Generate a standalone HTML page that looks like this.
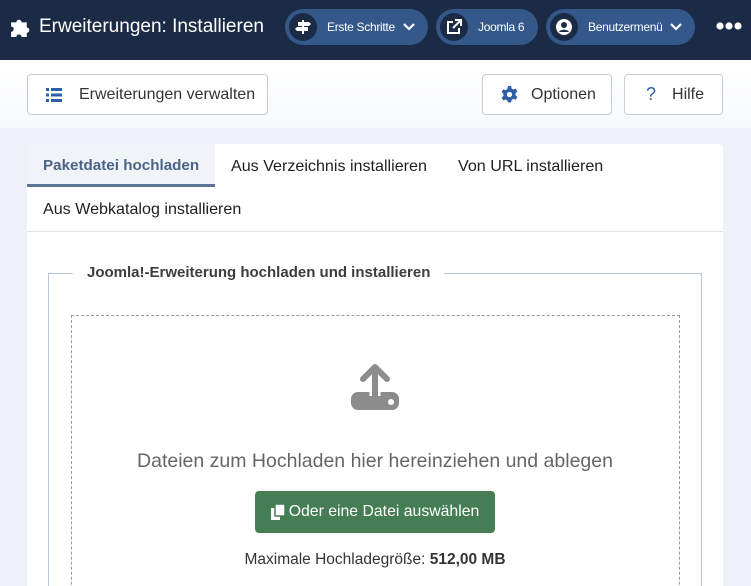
<!DOCTYPE html><html><head><meta charset="utf-8"><style>
*{box-sizing:border-box;margin:0;padding:0}
html,body{width:751px;height:586px;overflow:hidden}
body{background:#eef2f8;font-family:"Liberation Sans",sans-serif;position:relative;color:#22262a}
.a{position:absolute}
.hdr{left:0;top:0;width:751px;height:60px;background:#1c2b45}
.pill{position:absolute;top:9px;height:36px;border-radius:18px;background:#34588a;color:#fff;font-size:12px;display:flex;align-items:center;letter-spacing:-.3px}
.pill .c{width:28px;height:28px;border-radius:50%;background:#1c2b45;margin:0 10px 0 4px;display:flex;align-items:center;justify-content:center}
.tb{left:0;top:60px;width:751px;height:68px;background:linear-gradient(#fff,#f7f9fc)}
.btn{position:absolute;top:74px;height:41px;background:#fff;border:1px solid #c9ced6;border-radius:4px;font-size:16px;color:#333;display:flex;align-items:center}
.card{left:27px;top:144px;width:696px;height:450px;background:#fff;border-radius:4px;overflow:hidden}
.tab{position:absolute;font-size:16.1px;color:#1f1f1f}
</style></head><body>
<div class="a hdr"></div>
<svg class="a" style="left:9px;top:15px" width="23" height="23" viewBox="0 0 22 22"><path fill="#fff" d="M2 7h5a2.5 2.5 0 1 1 5 0h5v5a2.5 2.5 0 1 1 0 5v4H12a2.5 2.5 0 1 0-5 0H2v-5a2.5 2.5 0 1 0 0-5z"/></svg>
<div class="a" style="left:39px;top:16px;font-size:19px;color:#fff">Erweiterungen: Installieren</div>
<div class="pill" style="left:285px;width:143px"><div class="c"><svg width="16" height="16" viewBox="0 0 16 16"><path fill="#fff" d="M7 1h2v2h5l2 2-2 2H9v1h4v4H9v3H7v-3H2l-2-2 2-2h5V7H3V3h4z"/></svg></div>Erste Schritte<svg style="margin-left:8px" width="12" height="8" viewBox="0 0 12 8"><path d="M1 1l5 5 5-5" stroke="#fff" stroke-width="2.2" fill="none"/></svg></div>
<div class="pill" style="left:436px;width:102px"><div class="c"><svg width="16" height="16" viewBox="0 0 16 16" fill="none" stroke="#fff" stroke-width="2"><path d="M7 3H2v11h11V9M9 1h6v6M15 1L7 9"/></svg></div>Joomla 6</div>
<div class="pill" style="left:546px;width:149px"><div class="c"><svg width="18" height="18" viewBox="0 0 18 18"><circle cx="9" cy="9" r="8" fill="#fff"/><circle cx="9" cy="7" r="3" fill="#1c2b45"/><path d="M4 14c1-3 9-3 10 0" fill="#1c2b45"/></svg></div>Benutzermenü<svg style="margin-left:8px" width="12" height="8" viewBox="0 0 12 8"><path d="M1 1l5 5 5-5" stroke="#fff" stroke-width="2.2" fill="none"/></svg></div>
<svg class="a" style="left:716px;top:21px" width="26" height="10"><circle cx="4" cy="5" r="3.6" fill="#fff"/><circle cx="13" cy="5" r="3.6" fill="#fff"/><circle cx="22" cy="5" r="3.6" fill="#fff"/></svg>
<div class="a tb"></div>
<div class="btn" style="left:27px;width:241px"><svg style="margin:0 17px 0 18px" width="16" height="14" viewBox="0 0 16 14" fill="#2d5fa8"><rect x="0" y="0" width="3" height="3"/><rect x="5" y="0" width="11" height="3"/><rect x="0" y="5.5" width="3" height="3"/><rect x="5" y="5.5" width="11" height="3"/><rect x="0" y="11" width="3" height="3"/><rect x="5" y="11" width="11" height="3"/></svg>Erweiterungen verwalten</div>
<div class="btn" style="left:482px;width:130px"><svg style="margin:0 13px 0 18px" width="17" height="17" viewBox="0 0 16 16"><path fill="#2d5fa8" d="M6.5 0h3l.5 2.3 1.7 1 2.2-.8 1.5 2.6-1.7 1.6v2l1.7 1.6-1.5 2.6-2.2-.8-1.7 1-.5 2.3h-3L6 13.7l-1.7-1-2.2.8L.6 10.9l1.7-1.6v-2L.6 5.7 2.1 3.1l2.2.8 1.7-1z"/><circle cx="8" cy="8" r="2.5" fill="#fff"/></svg>Optionen</div>
<div class="btn" style="left:624px;width:99px"><span style="color:#2d5fa8;margin:0 16px 0 21px;font-size:18px">?</span>Hilfe</div>
<div class="a card">
<div class="a" style="left:0;top:0;width:188px;height:43px;background:#f0f3f7;border-bottom:3px solid #5c7597"></div>
<div class="tab" style="left:16px;top:13px;color:#4a6488;font-weight:bold;font-size:15.2px">Paketdatei hochladen</div>
<div class="tab" style="left:204px;top:13px">Aus Verzeichnis installieren</div>
<div class="tab" style="left:431px;top:13px">Von URL installieren</div>
<div class="tab" style="left:16px;top:56px">Aus Webkatalog installieren</div>
<div class="a" style="left:0;top:87px;width:696px;height:1px;background:#dfe3e8"></div>
<div class="a" style="left:21px;top:129px;width:654px;height:330px;border:1px solid #b6c6d6"></div>
<div class="a" style="left:46px;top:120px;background:#fff;padding:0 14px;font-size:15px;font-weight:bold;color:#3d3d3d">Joomla!-Erweiterung hochladen und installieren</div>
<div class="a" style="left:44px;top:171px;width:609px;height:300px;border:1px dashed #999"></div>
<svg class="a" style="left:323px;top:218px" width="50" height="50" viewBox="0 0 50 50"><rect x="1" y="30" width="48" height="18" rx="7" fill="#8c8c8c"/><circle cx="41" cy="40" r="3" fill="#fff"/><path d="M25 4v30" stroke="#fff" stroke-width="11"/><path d="M25 6v28M13 17l12-12 12 12" stroke="#8c8c8c" stroke-width="6" fill="none" stroke-linecap="round" stroke-linejoin="round"/></svg>
<div class="a" style="left:0;width:696px;top:306px;text-align:center;font-size:19.5px;color:#666">Dateien zum Hochladen hier hereinziehen und ablegen</div>
<div class="a" style="left:228px;top:347px;width:240px;height:42px;background:#457d54;border-radius:4px;color:#fff;font-size:15.8px;display:flex;align-items:center;justify-content:center"><svg style="margin-right:4px" width="14" height="16" viewBox="0 0 14 16"><rect x="0" y="4" width="9" height="12" fill="#fff"/><rect x="4" y="0" width="10" height="12" fill="#fff" stroke="#457d54" stroke-width="1.5"/></svg>Oder eine Datei auswählen</div>
<div class="a" style="left:0;width:696px;top:407px;text-align:center;font-size:15.5px;color:#333">Maximale Hochladegröße: <b>512,00 MB</b></div>
</div>
</body></html>
